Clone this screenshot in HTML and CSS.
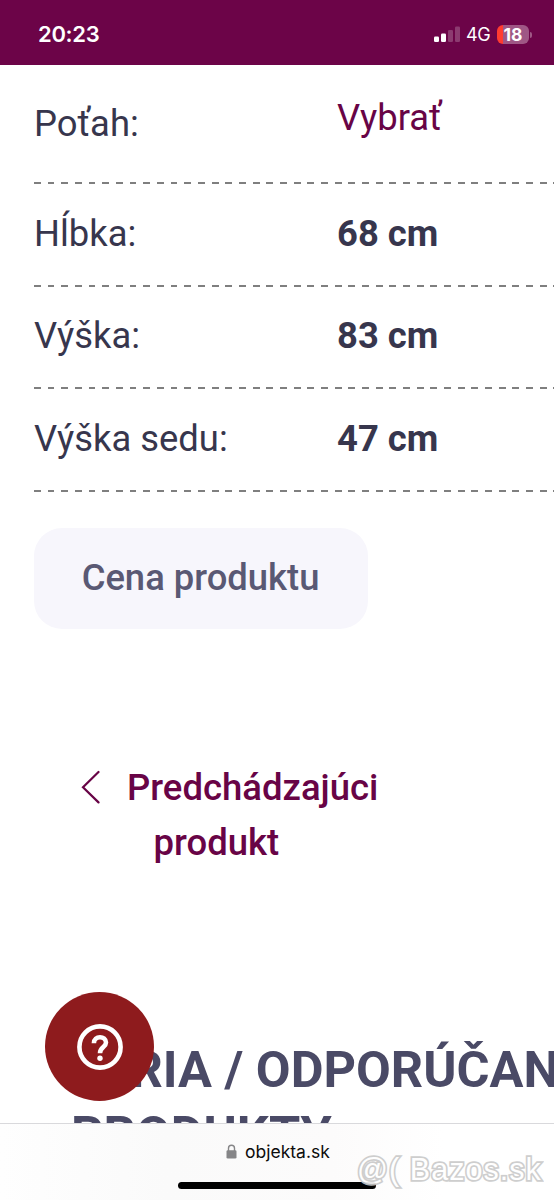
FILE: index.html
```html
<!DOCTYPE html>
<html lang="sk">
<head>
<meta charset="utf-8">
<title>objekta.sk</title>
<link rel="stylesheet" href="styles.css">
</head>
<body>
<div class="screen">
  <header class="status">
    <span class="clock">20:23</span>
    <div class="indicators">
      <svg class="signal" width="26" height="17" viewBox="0 0 26 17">
        <rect x="0" y="10.5" width="5" height="5.5" rx="1.3" fill="#fff"/>
        <rect x="7" y="7.5" width="5" height="8.5" rx="1.3" fill="#fff"/>
        <rect x="14" y="4" width="5" height="12" rx="1.3" fill="#fff" opacity=".22"/>
        <rect x="21" y="0.5" width="5" height="15.5" rx="1.3" fill="#fff" opacity=".22"/>
      </svg>
      <span class="network">4G</span>
      <div class="battery"><span class="level">18</span></div>
      <i class="battery-cap"></i>
    </div>
  </header>
  <main class="page">
    <dl class="specs">
      <div class="row first"><dt>Poťah:</dt><dd><a class="choose">Vybrať</a></dd></div>
      <div class="row"><dt>Hĺbka:</dt><dd>68 cm</dd></div>
      <div class="row"><dt>Výška:</dt><dd>83 cm</dd></div>
      <div class="row"><dt>Výška sedu:</dt><dd>47 cm</dd></div>
    </dl>
    <button class="price">Cena produktu</button>
    <nav class="previous">
      <svg width="20" height="34" viewBox="0 0 20 34"><path d="M18.5 2 L3 17.2 L18.5 32.4" fill="none" stroke="#680446" stroke-width="2.2" stroke-linecap="round"/></svg>
      <a class="previous-label"><span>Predchádzajúci</span><span class="second">produkt</span></a>
    </nav>
    <h2 class="series"><span>SÉRIA / ODPORÚČANÉ</span><span>PRODUKTY</span></h2>
  </main>
  <footer class="browser-bar">
    <div class="address">
      <svg width="11" height="15" viewBox="0 0 11 15"><path d="M2.5 7V4.2a3 3 0 0 1 6 0V7" fill="none" stroke="#858587" stroke-width="1.4"/><rect x=".5" y="6.3" width="10" height="8.2" rx="1.3" fill="#858587"/></svg>
      <span>objekta.sk</span>
    </div>
    <div class="home"></div>
  </footer>
  <div class="help">
    <svg width="46" height="46" viewBox="0 0 46 46" fill="none" stroke="#fff">
      <circle cx="23" cy="23" r="20.6" stroke-width="4.6"/>
      <path d="M16.9 19.2C16.9 11.2 29 11.4 29 18.6C29 23.2 23 23 23 29.2" stroke-width="4.6"/>
      <circle cx="23" cy="34.2" r="2.7" fill="#fff" stroke="none"/>
    </svg>
  </div>
  <div class="watermark">@( Bazos.sk</div>
</div>
</body>
</html>
```

FILE: styles.css
```css
* { box-sizing: border-box; }
body { margin: 0; background: #fff; }
.screen {
  position: relative;
  display: flex;
  flex-direction: column;
  width: 554px;
  height: 1200px;
  overflow: hidden;
  font-family: Roboto, sans-serif;
  color: #37364d;
}
.status {
  flex: none;
  display: flex;
  justify-content: space-between;
  height: 65px;
  padding: 22px 22px 0 38px;
  background: #6c0448;
  color: #fff;
  font-family: Inter, sans-serif;
}
.clock { font-size: 22px; line-height: 25px; font-weight: 600; letter-spacing: -.3px; }
.indicators { display: flex; align-items: center; height: 25px; }
.network { margin-left: 6px; font-size: 18px; width: 25px; letter-spacing: -.5px; }
.battery {
  margin-left: 6px;
  width: 32px;
  height: 19px;
  border-radius: 6px;
  background: linear-gradient(90deg, #ff3b30 6px, #9f5785 6px);
  text-align: center;
}
.level { display: block; font-size: 17.5px; line-height: 19px; font-weight: 700; }
.battery-cap { width: 2px; height: 6px; margin-left: 1px; border-radius: 0 3px 3px 0; background: #9f5785; }
.page { flex: none; height: 1058px; overflow: hidden; font-size: 36.4px; line-height: 43px; }
.specs { margin: 0 0 0 34px; }
.row {
  display: grid;
  grid-template-columns: 303px 1fr;
  height: 102.5px;
  padding-top: 27.5px;
  background: repeating-linear-gradient(90deg, #7f7f7f 0 6.8px, transparent 6.8px 13.67px) left bottom / 100% 2px no-repeat;
}
.row.first { height: 119px; padding-top: 37px; }
dt { white-space: nowrap; }
dd { margin: 0; font-weight: 700; }
.choose { display: block; margin-top: -6px; font-weight: 400; color: #680446; }
.price {
  display: block;
  width: 334px;
  height: 101px;
  margin: 36px 0 0 34px;
  padding: 0 1px 2px 0;
  border: 0;
  border-radius: 28px;
  background: #f7f6fc;
  color: #5a5974;
  font: 500 36.4px/43px Roboto, sans-serif;
}
.previous { display: flex; gap: 27px; margin: 131px 0 0 80px; color: #680446; }
.previous svg { margin-top: 10px; }
.previous-label { display: flex; flex-direction: column; font-weight: 500; font-size: 36.5px; line-height: 55px; }
.second { padding-left: 26.5px; }
.series { display: flex; flex-direction: column; margin: 167px 0 0 71px; font-size: 50.5px; line-height: 65px; font-weight: 700; color: #4a4a66; white-space: nowrap; }
.browser-bar {
  flex: none;
  display: flex;
  flex-direction: column;
  height: 77px;
  border-top: 1px solid #d9d9dc;
  background: linear-gradient(90deg, #fefefe, #fafafa 30%, #fcfbfb 60%, #fff 80%);
  color: #0c0c0c;
  font-family: Inter, sans-serif;
}
.address { display: flex; align-items: center; gap: 8px; height: 22px; margin: 16px 0 0 226px; font-size: 17.5px; }
.home { width: 198px; height: 7px; margin: 19.5px 0 0 178px; border-radius: 4px; background: #000; }
.help {
  position: absolute;
  left: 45px;
  top: 992px;
  display: flex;
  align-items: center;
  justify-content: center;
  width: 109px;
  height: 109px;
  border-radius: 50%;
  background: #8e1b1d;
}
.watermark {
  position: absolute;
  left: 357px;
  top: 1152px;
  font: 30.5px/34px "Liberation Sans", sans-serif;
  letter-spacing: 1.05px;
  white-space: pre;
  color: #fff;
  -webkit-text-stroke: 3.4px #c9c9c9;
  paint-order: stroke fill;
  opacity: .9;
}
```
